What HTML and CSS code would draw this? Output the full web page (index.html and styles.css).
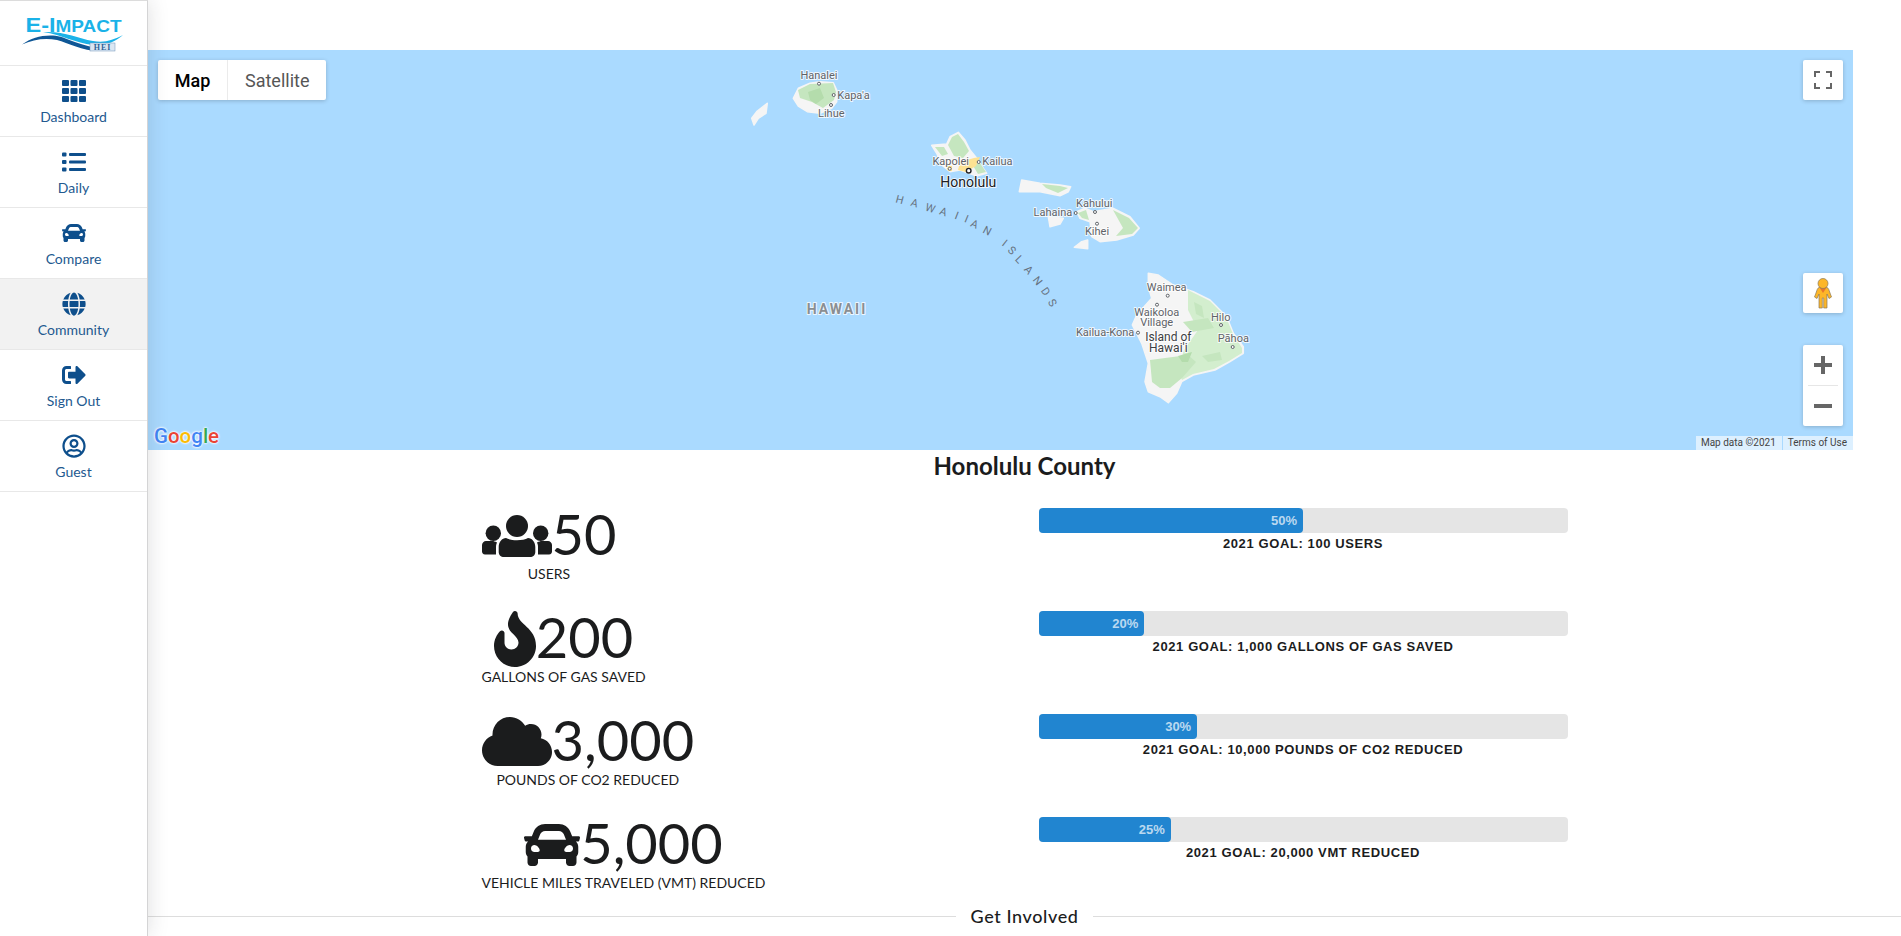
FILE: index.html
```html
<!DOCTYPE html>
<html lang="en">
<head>
    <meta charset="UTF-8">
    <title>E-Impact - Community</title>
    <link rel="stylesheet" href="styles.css">
</head>
<body>

    <aside class="sidebar">
        <div class="logo">
            <svg width="115" height="48" viewBox="0 0 115 48">
                <text class="logo-text" x="10.500" y="21.500" textLength="96" lengthAdjust="spacingAndGlyphs">E-I<tspan class="logo-small">MPACT</tspan></text>
                <path class="wave-light" d="M28 22 C50 21 62 28 78 31 C90 33 98 30 108 25 C100 32 90 36 78 35 C60 33 48 25 28 22Z"/>
                <path class="wave-dark" d="M7 34.500 C16 28 26 25 38 25.500 C52 26.500 62 36 88 38.500 L88 41 C68 42 54 33 42 30 C30 27.500 18 29.500 7 34.500Z"/>
                <rect class="badge" x="75" y="33" width="25" height="8"/>
                <text class="badge-text" x="87.500" y="40">HEI</text>
            </svg>
        </div>
        <nav>
            <a class="nav-item" href="#">
                <svg class="nav-icon" viewBox="0 0 24 22">
                    <rect x="0" y="0" width="7" height="6" rx="1"/><rect x="8.500" y="0" width="7" height="6" rx="1"/><rect x="17" y="0" width="7" height="6" rx="1"/>
                    <rect x="0" y="8" width="7" height="6" rx="1"/><rect x="8.500" y="8" width="7" height="6" rx="1"/><rect x="17" y="8" width="7" height="6" rx="1"/>
                    <rect x="0" y="16" width="7" height="6" rx="1"/><rect x="8.500" y="16" width="7" height="6" rx="1"/><rect x="17" y="16" width="7" height="6" rx="1"/>
                </svg>
                <span>Dashboard</span>
            </a>
            <a class="nav-item" href="#">
                <svg class="nav-icon" viewBox="0 0 24 20">
                    <rect x="0" y="0.500" width="4.500" height="4" rx="1"/><rect x="7" y="1" width="17" height="3" rx="1"/>
                    <rect x="0" y="8" width="4.500" height="4" rx="1"/><rect x="7" y="8.500" width="17" height="3" rx="1"/>
                    <rect x="0" y="15.500" width="4.500" height="4" rx="1"/><rect x="7" y="16" width="17" height="3" rx="1"/>
                </svg>
                <span>Daily</span>
            </a>
            <a class="nav-item" href="#">
                <svg class="nav-icon" viewBox="0 0 512 512"><path d="M499.99 176h-59.87l-16.64-41.6C406.38 91.63 365.57 64 319.5 64h-127c-46.06 0-86.88 27.63-103.99 70.4L71.87 176H12.01C4.2 176-1.53 183.34.37 190.91l6 24C7.7 220.25 12.5 224 18.01 224h20.07C24.65 235.73 16 252.78 16 272v48c0 16.12 6.16 30.67 16 41.93V416c0 17.67 14.33 32 32 32h32c17.67 0 32-14.33 32-32v-32h256v32c0 17.67 14.33 32 32 32h32c17.67 0 32-14.33 32-32v-54.07c9.84-11.25 16-25.8 16-41.93v-48c0-19.22-8.65-36.27-22.07-48H494c5.51 0 10.31-3.75 11.64-9.09l6-24c1.89-7.57-3.84-14.91-11.65-14.91zm-352.06-17.83c7.29-18.22 24.94-30.17 44.57-30.17h127c19.63 0 37.28 11.95 44.57 30.17L384 208H128l19.93-49.83zM96 319.8c-19.2 0-32-12.76-32-31.9S76.8 256 96 256s48 28.71 48 47.85-28.8 15.95-48 15.95zm320 0c-19.2 0-48 3.19-48-15.95S396.8 256 416 256s32 12.76 32 31.9-12.8 31.9-32 31.9z"/></svg>
                <span>Compare</span>
            </a>
            <a class="nav-item active" href="#">
                <svg class="nav-icon" viewBox="0 0 496 512"><path d="M336.5 160C322 70.7 287.8 8 248 8s-74 62.7-88.5 152h177zM152 256c0 22.2 1.2 43.5 3.3 64h185.3c2.1-20.5 3.3-41.8 3.3-64s-1.2-43.5-3.3-64H155.3c-2.1 20.5-3.3 41.8-3.3 64zm324.7-96c-28.6-67.9-86.5-120.4-158-141.6 24.4 33.8 41.2 84.7 50 141.6h108zM177.2 18.4C105.8 39.6 47.8 92.1 19.3 160h108c8.7-56.9 25.5-107.8 49.9-141.6zM487.4 192H372.7c2.1 21 3.3 42.5 3.3 64s-1.2 43-3.3 64h114.6c5.5-20.5 8.6-41.8 8.6-64s-3.1-43.5-8.5-64zM120 256c0-21.5 1.2-43 3.3-64H8.6C3.2 212.5 0 233.8 0 256s3.2 43.5 8.6 64h114.6c-2-21-3.2-42.5-3.2-64zm39.5 96c14.5 89.3 48.7 152 88.5 152s74-62.7 88.5-152h-177zm159.3 141.6c71.4-21.2 129.4-73.7 158-141.6h-108c-8.8 56.9-25.6 107.8-50 141.6zM19.3 352c28.6 67.9 86.5 120.4 158 141.6-24.4-33.8-41.2-84.7-50-141.6h-108z"/></svg>
                <span>Community</span>
            </a>
            <a class="nav-item" href="#">
                <svg class="nav-icon" viewBox="0 0 512 512"><path d="M497 273L329 441c-15 15-41 4.5-41-17v-96H152c-13.3 0-24-10.7-24-24v-96c0-13.3 10.7-24 24-24h136V88c0-21.4 25.9-32 41-17l168 168c9.3 9.4 9.3 24.6 0 34zM192 436v-40c0-6.6-5.4-12-12-12H96c-17.7 0-32-14.3-32-32V160c0-17.7 14.3-32 32-32h84c6.6 0 12-5.4 12-12V76c0-6.6-5.4-12-12-12H96c-53 0-96 43-96 96v192c0 53 43 96 96 96h84c6.6 0 12-5.4 12-12z"/></svg>
                <span>Sign Out</span>
            </a>
            <a class="nav-item" href="#">
                <svg class="nav-icon" viewBox="0 0 496 512"><path d="M248 104c-53 0-96 43-96 96s43 96 96 96 96-43 96-96-43-96-96-96zm0 144c-26.5 0-48-21.5-48-48s21.5-48 48-48 48 21.5 48 48-21.5 48-48 48zm0-240C111 8 0 119 0 256s111 248 248 248 248-111 248-248S385 8 248 8zm0 448c-49.7 0-95.1-18.3-130.1-48.4 14.9-23 40.4-38.6 69.6-39.5 20.8 6.4 40.6 9.6 60.5 9.6s39.7-3.1 60.5-9.6c29.2 1 54.7 16.5 69.6 39.5-35 30.1-80.4 48.4-130.1 48.4zm162.7-84.1c-24.4-31.4-62.1-51.9-105.1-51.9-10.2 0-26 9.6-57.6 9.6-31.5 0-47.4-9.6-57.6-9.6-42.9 0-80.6 20.5-105.1 51.9C61.9 339.2 48 299.2 48 256c0-110.3 89.7-200 200-200s200 89.7 200 200c0 43.2-13.9 83.2-37.3 115.9z"/></svg>
                <span>Guest</span>
            </a>
        </nav>
    </aside>

    <main class="content">
        <div class="map">
            <svg class="map-canvas" width="1705" height="400" viewBox="0 0 1705 400">
                <!-- islands -->
                <g class="islands">
                    <polygon class="land" points="603.7,68.3 608.7,61.7 617,55 619.3,53.3 618,63.3 610.3,68.3 606,75"/>
                    <polygon class="land" points="645.3,48.3 650.3,38.3 662,33.3 672,31.7 685.3,32.7 688.7,40 688.7,51.7 683.7,58.3 672,63.3 659.3,61.7 650.3,56"/>
                    <polygon class="green" points="650,40 662,34 685,33 688,42 686,50 675,58 664,52 652,48"/>
                    <polygon class="green-dark" points="660,42 672,38 676,48 668,54 662,50"/>
                    <polygon class="land" points="783.7,95.3 798.7,94 802,86.7 810.3,82.3 817,90 822,100 828.7,108.3 838.7,123.3 828.7,126 812,120 802,121.7 793.7,115 788.7,103.3"/>
                    <polygon class="green" points="800,95 804,87 810,84 816,92 821,101 815,108 806,106"/>
                    <polygon class="green" points="787,97 796,97 800,104 794,106"/>
                    <polygon class="green" points="824,114 832,113 838,122 830,124"/>
                    <polygon class="yellow" points="812,112 826,108 832,107 828,116 818,122 810,120"/>
                    <polygon class="yellow" points="798,116 804,116 804,121 800,121"/>
                    <polygon class="land" points="873.7,130 892,133.3 912,135 922.7,136.7 920.3,141.7 912,145.7 892,141.7 871.3,141.7"/>
                    <polygon class="green" points="894,134 912,136 920,138 910,143 898,138"/>
                    <polygon class="land" points="900.3,166.7 915.3,168.3 912,174 902,176.7"/>
                    <polygon class="land" points="926.3,197.3 933.7,191.7 939.7,190 939.7,198.7"/>
                    <polygon class="land" points="928.7,161.7 937,158.3 945.3,161.7 965.3,158.3 982,166.7 991.3,178.3 985.3,185 968.7,190 952,191.7 943.7,186.7 942,171.7 932,168.3"/>
                    <polygon class="green" points="930,163 938,160 941,170 934,168"/>
                    <polygon class="green" points="965,160 981,168 990,178 984,184 968,186 975,178"/>
                    <polygon class="land" points="1000.3,223.3 1010.3,225 1025.3,235 1045.3,241.7 1062,250 1078.7,266.7 1085.3,283.3 1095.3,296.7 1095.3,303.3 1082,311.7 1067,320 1045.3,325 1033.7,331.7 1028.7,343.3 1020.3,352.7 1012,346.7 1000.3,341.7 997,331.7 1000.3,313.3 993.7,293.3 984.3,275 988.7,265 1003.7,248.3 1000.3,236.7"/>
                    <polygon class="green-light" points="1040,240 1062,251 1078,267 1085,284 1094,298 1094,303 1081,311 1066,319 1045,324 1034,330 1030,320 1036,300 1050,280 1040,260"/>
                    <polygon class="green" points="1035,272 1060,268 1066,278 1044,282"/>
                    <polygon class="green" points="1002,310 1040,305 1048,312 1034,328 1022,338 1012,338 1004,332"/>
                    <polygon class="green-dark" points="1030,306 1044,302 1040,312 1034,312"/>
                    <polygon class="green" points="1054,306 1072,302 1074,310 1060,312"/>
                    <polygon class="green" points="1046,252 1054,256 1056,268 1048,264"/>
                </g>

                <!-- town dots -->
                <circle class="dot" cx="671" cy="33.7" r="1.5"/><circle class="dot" cx="685.7" cy="45" r="1.5"/><circle class="dot" cx="683" cy="55" r="1.5"/>
                <circle class="dot" cx="801.7" cy="118.7" r="1.5"/><circle class="dot" cx="830.7" cy="112" r="1.5"/><circle class="dot-big" cx="820.7" cy="120.7" r="2.3"/>
                <circle class="dot" cx="947" cy="162" r="1.5"/><circle class="dot" cx="927.7" cy="163" r="1.5"/><circle class="dot" cx="949" cy="173.7" r="1.5"/>
                <circle class="dot" cx="1019.7" cy="245.7" r="1.5"/><circle class="dot" cx="1009" cy="254.7" r="1.5"/><circle class="dot" cx="990" cy="282.7" r="1.5"/>
                <circle class="dot" cx="1073" cy="275" r="1.5"/><circle class="dot" cx="1084.7" cy="297" r="1.5"/>

                <!-- labels -->
                <text class="town mid" x="671" y="29.3">Hanalei</text>
                <text class="town" x="689.3" y="48.7">Kapa'a</text>
                <text class="town mid" x="683.3" y="66.7">Lihue</text>
                <text class="town mid" x="802.7" y="114.7">Kapolei</text>
                <text class="town" x="834.3" y="115.3">Kailua</text>
                <text class="city mid" x="820.3" y="136.7">Honolulu</text>
                <text class="town mid" x="946.3" y="157.3">Kahului</text>
                <text class="town end" x="924.3" y="166">Lahaina</text>
                <text class="town mid" x="949" y="185.3">Kihei</text>
                <text class="town mid" x="1018.7" y="241.3">Waimea</text>
                <text class="town mid" x="1008.7" y="266">Waikoloa</text>
                <text class="town mid" x="1008.7" y="276">Village</text>
                <text class="town end" x="986.3" y="286">Kailua-Kona</text>
                <text class="island mid" x="1020.3" y="291">Island of</text>
                <text class="island mid" x="1020.3" y="302">Hawai'i</text>
                <text class="town mid" x="1072.7" y="270.7">Hilo</text>
                <text class="town mid" x="1085.3" y="292">Pāhoa</text>
                <text class="state mid" x="689" y="264">HAWAII</text>
                <text class="chain"
                    x="747.1 762 776.4 790.8 806 815.7 821.7 833.9 850 853.3 859 866.4 875.4 884.3 892.4 899.5"
                    y="152.2 155.6 160.2 164.1 168.5 171.8 176.1 182.3 186 195 201 209.8 219.8 230 240.8 252"
                    rotate="15 17 18 20 21 22 24 28 33 38 42 47 48 52 54 58">HAWAIIAN ISLANDS</text>
            </svg>

            <div class="map-type">
                <button class="map-btn selected">Map</button>
                <button class="map-btn">Satellite</button>
            </div>

            <button class="ctrl fullscreen">
                <svg width="18" height="18" viewBox="0 0 18 18"><path d="M0 6V0h6v2H2v4zM12 0h6v6h-2V2h-4zM18 12v6h-6v-2h4v-4zM6 18H0v-6h2v4h4z"/></svg>
            </button>

            <button class="ctrl pegman">
                <svg width="18" height="31" viewBox="0 0 18 31">
                    <path class="peg-body" d="M5 9.500 H13 C14.500 10 15 12 16 15 L17.500 19 L15 20.500 L13 16 V30 H9.700 V20 H8.300 V30 H5 V16 L3 20.500 L0.500 19 L2 15 C3 12 3.500 10 5 9.500Z"/>
                    <path class="peg-scarf" d="M5.500 9.500 H12.500 L9 15Z"/>
                    <circle class="peg-head" cx="9" cy="5.500" r="5"/>
                </svg>
            </button>

            <div class="zoom-box">
                <button class="ctrl-flat">
                    <svg width="18" height="18" viewBox="0 0 18 18"><path d="M7 0h4v7h7v4h-7v7H7v-7H0V7h7z"/></svg>
                </button>
                <div class="zoom-sep"></div>
                <button class="ctrl-flat">
                    <svg width="18" height="18" viewBox="0 0 18 18"><path d="M0 7h18v4H0z"/></svg>
                </button>
            </div>

            <div class="google">
                <span class="g-blue">G</span><span class="g-red">o</span><span class="g-yellow">o</span><span class="g-blue">g</span><span class="g-green">l</span><span class="g-red">e</span>
            </div>

            <div class="attribution">
                <span>Map data ©2021</span>
                <span>Terms of Use</span>
            </div>
        </div>

        <h2 class="county">Honolulu County</h2>

        <div class="stats">
            <div class="stat">
                <div class="stat-value">
                    <svg class="stat-icon" width="70" height="42" viewBox="0 0 70 42">
                        <circle cx="35" cy="11" r="11"/>
                        <circle cx="11.300" cy="18.300" r="7.700"/>
                        <circle cx="58.700" cy="18.300" r="7.700"/>
                        <path d="M24 23 C29 26 41 26 46 23 C50 23 53.300 27 53.300 32 V37 C53.300 40 51 42 48 42 H22 C19 42 16.700 40 16.700 37 V32 C16.700 27 20 23 24 23Z"/>
                        <path d="M4 26 H10.500 C11.500 26 13 26.500 15 27.500 C14 29.500 14 31 14 33 V39.500 H3 C1 39.500 0 38 0 36.500 V30 C0 28 2 26 4 26Z"/>
                        <path d="M66 26 H59.500 C58.500 26 57 26.500 55 27.500 C56 29.500 56 31 56 33 V39.500 H67 C69 39.500 70 38 70 36.500 V30 C70 28 68 26 66 26Z"/>
                    </svg>
                    <span>50</span>
                </div>
                <div class="stat-label">USERS</div>
            </div>
            <div class="goal">
                <div class="bar"><div class="bar-fill" style="width: 50%">50%</div></div>
                <div class="goal-label">2021 GOAL: 100 USERS</div>
            </div>

            <div class="stat">
                <div class="stat-value">
                    <svg class="stat-icon" width="42" height="56" viewBox="0 0 384 512"><path d="M216 23.860c0-23.800-30.650-32.770-44.150-13.040C48 191.850 224 200 224 288c0 35.630-29.110 64.460-64.850 63.990-35.170-.45-63.150-29.770-63.150-64.940v-85.510c0-21.700-26.470-32.230-41.430-16.500C27.800 213.160 0 261.330 0 320c0 105.870 86.130 192 192 192s192-86.130 192-192c0-170.290-168-193-168-296.140z"/></svg>
                    <span>200</span>
                </div>
                <div class="stat-label">GALLONS OF GAS SAVED</div>
            </div>
            <div class="goal">
                <div class="bar"><div class="bar-fill" style="width: 20%">20%</div></div>
                <div class="goal-label">2021 GOAL: 1,000 GALLONS OF GAS SAVED</div>
            </div>

            <div class="stat">
                <div class="stat-value">
                    <svg class="stat-icon" width="70" height="49" viewBox="0 32 640 448"><path d="M537.600 226.600c4.100-10.700 6.400-22.400 6.400-34.600 0-53-43-96-96-96-19.700 0-38.100 6-53.300 16.200C367 64.200 315.300 32 256 32c-88.400 0-160 71.600-160 160 0 2.700.1 5.400.2 8.100C40.200 219.800 0 273.200 0 336c0 79.500 64.500 144 144 144h368c70.700 0 128-57.300 128-128 0-61.900-44-113.600-102.400-125.400z"/></svg>
                    <span>3,000</span>
                </div>
                <div class="stat-label">POUNDS OF CO2 REDUCED</div>
            </div>
            <div class="goal">
                <div class="bar"><div class="bar-fill" style="width: 30%">30%</div></div>
                <div class="goal-label">2021 GOAL: 10,000 POUNDS OF CO2 REDUCED</div>
            </div>

            <div class="stat">
                <div class="stat-value">
                    <svg class="stat-icon" width="56" height="56" viewBox="0 0 512 512"><path d="M499.99 176h-59.87l-16.64-41.6C406.38 91.63 365.57 64 319.5 64h-127c-46.06 0-86.88 27.63-103.99 70.4L71.87 176H12.01C4.2 176-1.53 183.34.37 190.91l6 24C7.7 220.25 12.5 224 18.01 224h20.07C24.65 235.73 16 252.78 16 272v48c0 16.12 6.16 30.67 16 41.93V416c0 17.67 14.33 32 32 32h32c17.67 0 32-14.33 32-32v-32h256v32c0 17.67 14.33 32 32 32h32c17.67 0 32-14.33 32-32v-54.07c9.84-11.25 16-25.8 16-41.93v-48c0-19.22-8.65-36.27-22.07-48H494c5.51 0 10.31-3.75 11.64-9.09l6-24c1.89-7.57-3.84-14.91-11.65-14.91zm-352.06-17.83c7.29-18.22 24.94-30.17 44.57-30.17h127c19.63 0 37.28 11.95 44.57 30.17L384 208H128l19.93-49.83zM96 319.8c-19.2 0-32-12.76-32-31.9S76.8 256 96 256s48 28.71 48 47.85-28.8 15.95-48 15.95zm320 0c-19.2 0-48 3.19-48-15.95S396.8 256 416 256s32 12.76 32 31.9-12.8 31.9-32 31.9z"/></svg>
                    <span>5,000</span>
                </div>
                <div class="stat-label">VEHICLE MILES TRAVELED (VMT) REDUCED</div>
            </div>
            <div class="goal">
                <div class="bar"><div class="bar-fill" style="width: 25%">25%</div></div>
                <div class="goal-label">2021 GOAL: 20,000 VMT REDUCED</div>
            </div>
        </div>

        <div class="divider">Get Involved</div>
    </main>

</body>
</html>
```

FILE: styles.css
```css
html, body {
    margin: 0;
    padding: 0;
    height: 100%;
}

body {
    display: flex;
    font-family: Lato, Arial, sans-serif;
    font-size: 14px;
    color: #1b1c1d;
    background-color: white;
    overflow: hidden;
}

.sidebar {
    flex: 0 0 148px;
    box-sizing: border-box;
    height: 100vh;
    background-color: white;
    border-top: 1px solid #dcdcdc;
    border-right: 1px solid #d4d4d5;
    box-shadow: 0 0 20px rgba(34, 36, 38, 0.15);
    position: relative;
    z-index: 2;
}

.logo {
    box-sizing: border-box;
    height: 65px;
    padding-top: 9px;
    padding-left: 15px;
    border-bottom: 1px solid #e8e8e8;
}

.logo svg {
    display: block;
}

.logo-text {
    font-family: "Liberation Sans", Arial, sans-serif;
    font-size: 21px;
    font-weight: 700;
    fill: #1ab2e8;
}

.logo-small {
    font-size: 17px;
}

.wave-light {
    fill: #1ab2e8;
}

.wave-dark {
    fill: #0f5796;
}

.badge {
    fill: #dbe7f3;
    stroke: #6f93b8;
    stroke-width: 0.5;
}

.badge-text {
    font-family: "Liberation Serif", serif;
    font-size: 8px;
    font-weight: 700;
    fill: #2e6296;
    text-anchor: middle;
    letter-spacing: 1px;
}

.nav-item {
    box-sizing: border-box;
    height: 71px;
    padding-top: 13px;
    display: flex;
    flex-direction: column;
    align-items: center;
    border-bottom: 1px solid #e8e8e8;
    color: #23598f;
    text-decoration: none;
    line-height: 18px;
}

.nav-item.active {
    background-color: #f2f2f2;
}

.nav-icon {
    width: 24px;
    height: 24px;
    fill: #0e4f8c;
    margin-bottom: 5px;
}

.content {
    flex: 1;
    min-width: 0;
}

.map {
    position: relative;
    height: 400px;
    margin: 50px 48px 0 0;
    background-color: #aadaff;
    overflow: hidden;
}

.map-canvas {
    position: absolute;
    top: 0;
    left: 0;
}

.islands {
    filter: blur(0.5px);
}

.land {
    fill: #f5f5f5;
    stroke: #f5f5f5;
    stroke-width: 1.5;
    stroke-linejoin: round;
}

.green { fill: #c5e6bf; }
.green-light { fill: #d3eece; }
.green-dark { fill: #b4dcac; }
.yellow { fill: #fde293; }

.dot {
    fill: white;
    stroke: #5f6368;
    stroke-width: 1;
}

.dot-big {
    fill: white;
    stroke: #202124;
    stroke-width: 1.4;
}

.town, .city, .island, .state {
    font-family: Roboto, Arial, sans-serif;
    paint-order: stroke;
    stroke: rgba(255, 255, 255, 0.8);
    stroke-width: 2px;
    stroke-linejoin: round;
}

.town {
    font-size: 11px;
    fill: #5f6368;
}

.city {
    font-size: 14px;
    fill: #202124;
}

.island {
    font-size: 12px;
    fill: #3c4043;
}

.state {
    font-size: 14px;
    font-weight: 700;
    letter-spacing: 2px;
    fill: #8a8e92;
}

.mid { text-anchor: middle; }
.end { text-anchor: end; }

.chain {
    font-family: Roboto, Arial, sans-serif;
    font-size: 11px;
    fill: #66727f;
}

.map-type {
    position: absolute;
    top: 10px;
    left: 10px;
    display: flex;
    background-color: white;
    border-radius: 2px;
    box-shadow: 0 1px 4px rgba(0, 0, 0, 0.2);
}

.map-btn {
    height: 40px;
    padding: 0 17px;
    border: none;
    background: none;
    font-family: Roboto, Arial, sans-serif;
    font-size: 18px;
    color: #565656;
}

.map-btn.selected {
    width: 70px;
    padding: 0;
    font-weight: 500;
    color: black;
    border-right: 1px solid #ebebeb;
}

.ctrl, .zoom-box {
    position: absolute;
    right: 10px;
    width: 40px;
    background-color: white;
    border: none;
    padding: 0;
    border-radius: 2px;
    box-shadow: 0 1px 4px rgba(0, 0, 0, 0.2);
}

.ctrl {
    height: 40px;
    display: flex;
    align-items: center;
    justify-content: center;
}

.ctrl svg, .ctrl-flat svg {
    fill: #666;
}

.fullscreen {
    top: 10px;
}

.pegman {
    top: 223px;
}

.peg-body {
    fill: #fdb628;
    stroke: #8a7a5a;
    stroke-width: 0.7;
}

.peg-scarf {
    fill: #e8762c;
}

.peg-head {
    fill: #fdb628;
    stroke: #8a7a5a;
    stroke-width: 0.7;
}

.zoom-box {
    top: 295px;
    height: 81px;
}

.ctrl-flat {
    display: flex;
    align-items: center;
    justify-content: center;
    width: 40px;
    height: 40px;
    padding: 0;
    border: none;
    background: none;
}

.zoom-sep {
    height: 1px;
    margin: 0 5px;
    background-color: #e6e6e6;
}

.google {
    position: absolute;
    left: 6px;
    bottom: 0;
    display: flex;
    font-family: Roboto, Arial, sans-serif;
    font-size: 20.5px;
    font-weight: 500;
    line-height: 28px;
    text-shadow: 0 0 2px white, 0 0 2px white, 0 0 3px white;
}

.g-blue { color: #4285f4; }
.g-red { color: #ea4335; }
.g-yellow { color: #fbbc05; }
.g-green { color: #34a853; }

.attribution {
    position: absolute;
    right: 0;
    bottom: 0;
    height: 14px;
    display: flex;
    gap: 1px;
    font-family: Roboto, Arial, sans-serif;
    font-size: 10px;
    line-height: 14px;
    color: #444;
}

.attribution span {
    padding: 0 6px 0 5px;
    background-color: rgba(255, 255, 255, 0.6);
}

.county {
    margin: 0;
    height: 32px;
    line-height: 32px;
    text-align: center;
    font-size: 24px;
    font-weight: 700;
}

.stats {
    display: grid;
    grid-template-columns: 557px 529px;
    grid-auto-rows: 76px;
    row-gap: 27px;
    width: 1086px;
    margin: 24px auto 0;
}

.stat {
    display: flex;
    flex-direction: column;
    align-items: center;
    justify-self: start;
}

.stat-value {
    display: flex;
    align-items: center;
    height: 56px;
    font-size: 56px;
    line-height: 56px;
    margin-bottom: 3px;
}

.stat-icon {
    fill: #1b1c1d;
    margin-top: 3px;
}

.stat-label {
    line-height: 17px;
}

.goal {
    padding-top: 2px;
}

.bar {
    height: 25px;
    background-color: #e5e5e5;
    border-radius: 4px;
}

.bar-fill {
    box-sizing: border-box;
    height: 100%;
    padding-right: 6px;
    text-align: right;
    background-color: #2185d0;
    border-radius: 4px;
    font-family: "Liberation Sans", Arial, sans-serif;
    font-size: 13px;
    font-weight: 700;
    line-height: 25px;
    color: rgba(255, 255, 255, 0.7);
}

.goal-label {
    margin-top: 4px;
    text-align: center;
    font-family: "Liberation Sans", Arial, sans-serif;
    font-size: 13px;
    font-weight: 700;
    letter-spacing: 0.6px;
    line-height: 14px;
}

.divider {
    display: flex;
    align-items: center;
    gap: 15px;
    margin-top: 13px;
    font-size: 18px;
    font-weight: 500;
    letter-spacing: 0.6px;
    line-height: 24px;
    white-space: nowrap;
}

.divider::before, .divider::after {
    content: "";
    flex: 1;
    height: 1px;
    background-color: #ddd;
}
```
